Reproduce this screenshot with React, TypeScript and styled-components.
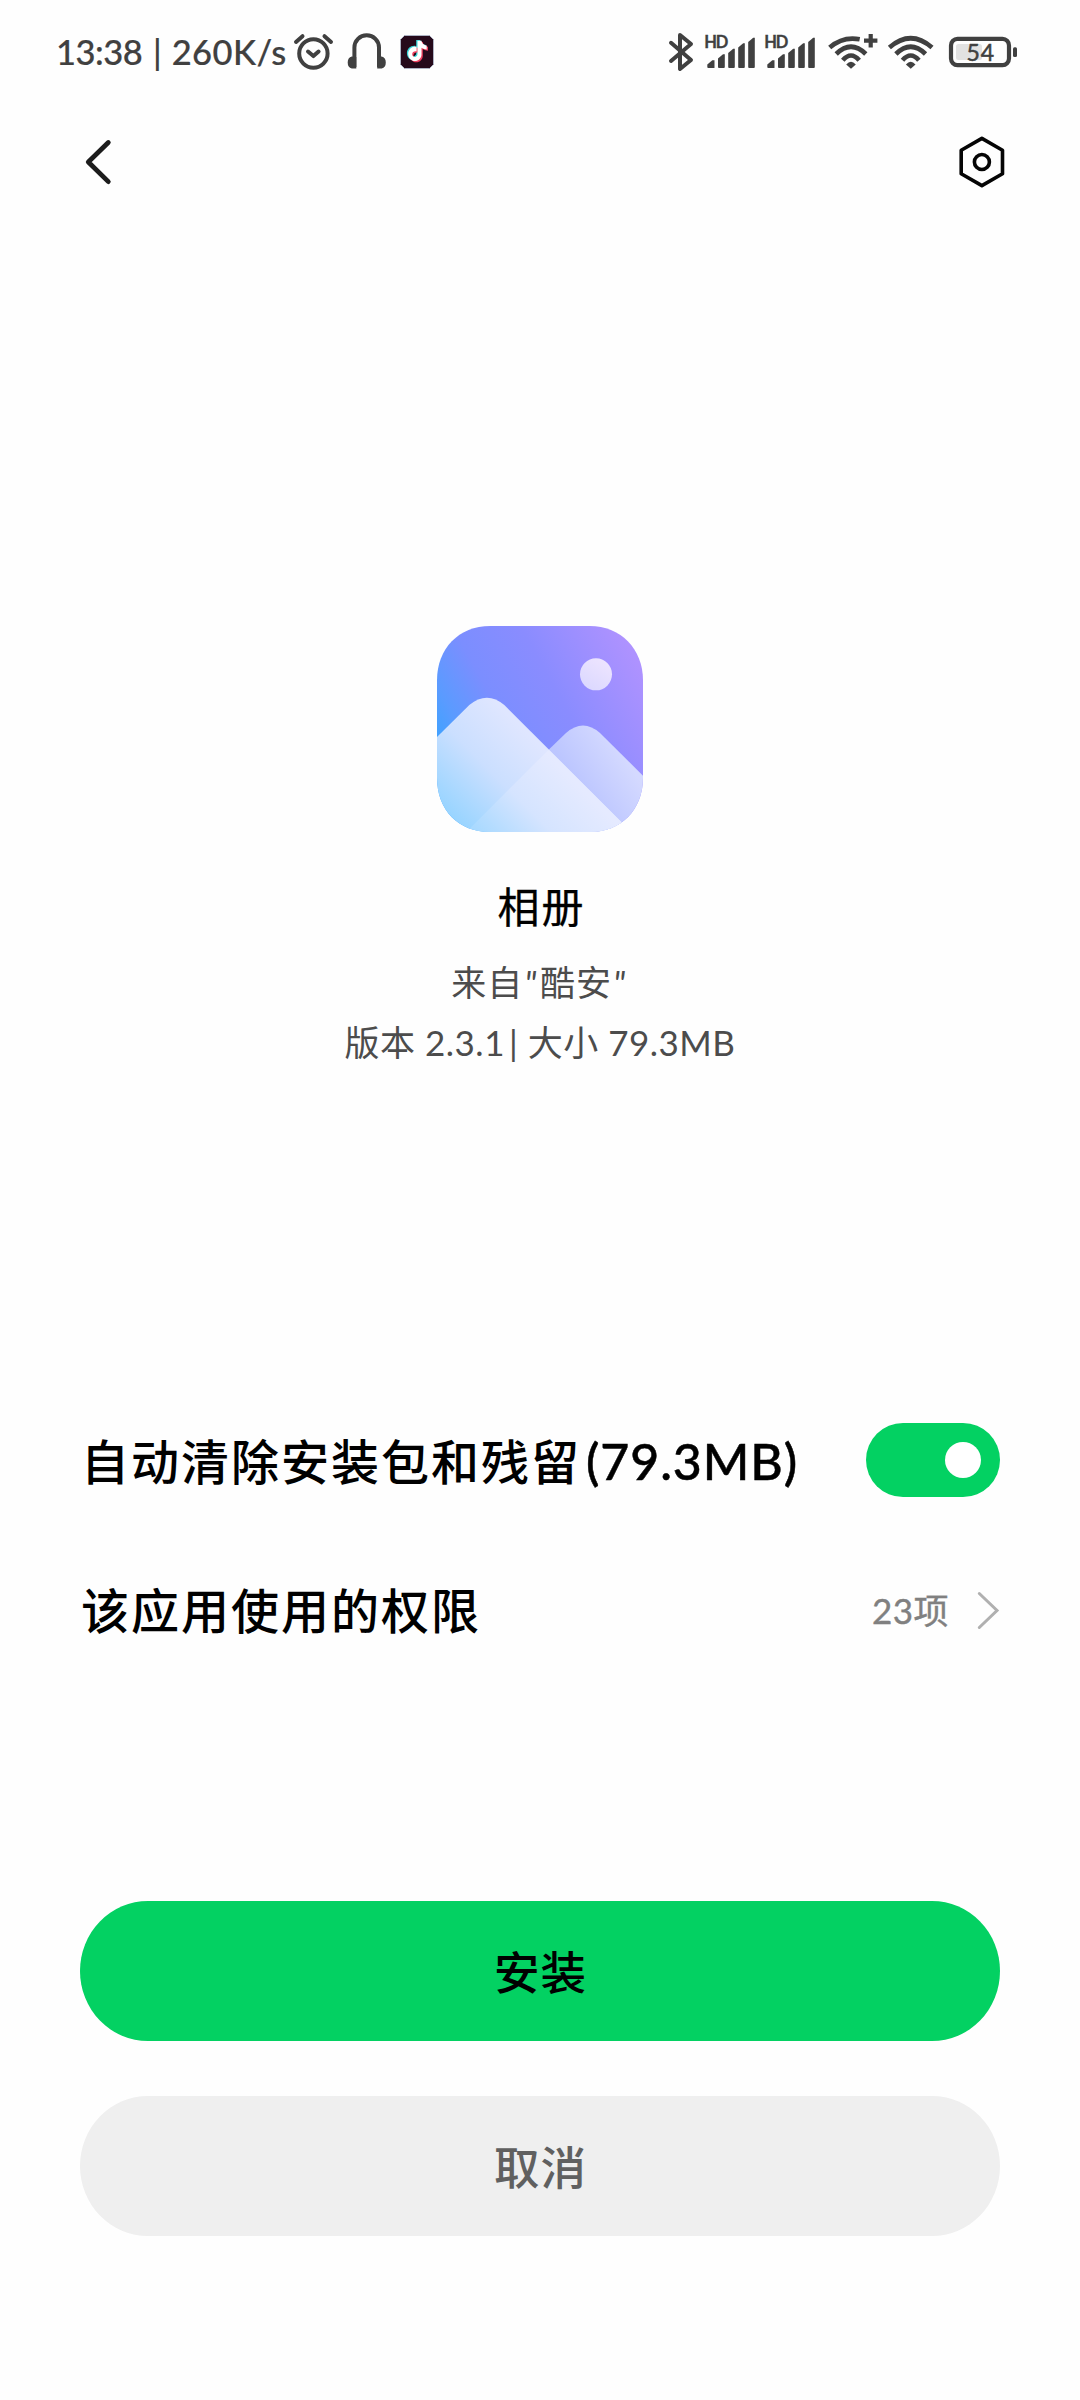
import React from "react";
import styled, { createGlobalStyle } from "styled-components";

const INK = "#404040";

const GlobalStyle = createGlobalStyle`
  *, *::before, *::after { box-sizing: border-box; }
  body {
    margin: 0;
    background: #fefefe;
    font-family: Lato, "Noto Sans CJK SC", sans-serif;
  }
  svg { display: block; flex: none; overflow: visible; }
`;

const Screen = styled.main`
  width: 1080px;
  height: 2400px;
  display: flex;
  flex-direction: column;
  background: #fefefe;
  overflow: hidden;
`;

const StatusBar = styled.header`
  height: 104px;
  padding: 0 61px 0 56px;
  display: flex;
  align-items: center;
  justify-content: space-between;
  color: ${INK};
`;

const StatusGroup = styled.div<{ $gap: number }>`
  display: flex;
  align-items: center;
  gap: ${(p) => p.$gap}px;
`;

const Clock = styled.div`
  width: 225px;
  display: flex;
  font-size: 34.5px;
  line-height: 44px;
  font-weight: 500;
  white-space: pre;
  -webkit-text-stroke: 0.2px ${INK};
`;

const ClockPart = styled.span<{ $spacing: number; $after?: number }>`
  letter-spacing: ${(p) => p.$spacing}px;
  margin-right: ${(p) => p.$after ?? 0}px;
`;

const TitleBar = styled.nav`
  height: 116px;
  padding: 0 72px 0 80px;
  display: flex;
  align-items: center;
  justify-content: space-between;
`;

const IconButton = styled.button`
  padding: 0;
  border: 0;
  background: none;
`;

const AppInfo = styled.section`
  margin-top: 406px;
  height: 759px;
  display: flex;
  flex-direction: column;
  align-items: center;
`;

const AppName = styled.h1`
  margin: 45px 0 15px;
  padding-left: 3px;
  height: 60px;
  font-size: 42px;
  line-height: 60px;
  font-weight: 400;
  letter-spacing: 2px;
  color: #000;
  -webkit-text-stroke: 0.3px #000;
`;

const AppMeta = styled.p<{ $spacing: number }>`
  margin: 0;
  height: 60px;
  font-size: 35px;
  line-height: 60px;
  letter-spacing: ${(p) => p.$spacing}px;
  color: #4c4c4c;
  white-space: pre;
`;

const Quote = styled.span`
  padding: 0 1px;
  font-style: italic;
  letter-spacing: 2.5px;
`;

const Divider = styled.span`
  margin-left: 4px;
`;

const Options = styled.section`
  padding: 0 80px;
  height: 516px;
`;

const OptionRow = styled.div`
  height: 150px;
  display: flex;
  align-items: center;
  justify-content: space-between;
`;

const OptionLabel = styled.span`
  padding: 2px 0 0 1px;
  font-size: 48px;
  line-height: 70px;
  font-weight: 500;
  letter-spacing: 2px;
  color: #000;
  white-space: nowrap;
`;

const Latin = styled.span`
  margin-left: 5px;
  font-size: 50px;
  letter-spacing: 0.9px;
  -webkit-text-stroke: 0.5px #000;
`;

const Switch = styled.div`
  width: 134px;
  height: 74px;
  padding-right: 19px;
  display: flex;
  align-items: center;
  justify-content: flex-end;
  border-radius: 37px;
  background: #03d162;
`;

const Knob = styled.span`
  width: 36px;
  height: 36px;
  border-radius: 50%;
  background: #fff;
`;

const OptionValue = styled.span`
  display: flex;
  align-items: center;
  gap: 27px;
  font-size: 35px;
  line-height: 50px;
  letter-spacing: 0.5px;
  color: #808080;
  -webkit-text-stroke: 0.4px #808080;
`;

const Actions = styled.footer`
  padding: 0 80px;
  display: flex;
  flex-direction: column;
  gap: 55px;
`;

const ActionButton = styled.button<{ $primary?: boolean }>`
  height: 140px;
  padding: 3px 0 0 1px;
  border: 0;
  border-radius: 68px / 70px;
  background: ${(p) => (p.$primary ? "#03d162" : "#efefef")};
  color: ${(p) => (p.$primary ? "#000" : "#606060")};
  font-family: inherit;
  font-size: 45.5px;
  line-height: 66px;
  font-weight: 500;
  letter-spacing: 1px;
`;

function AlarmIcon() {
  return (
    <svg width="40" height="40" viewBox="294 32 40 40" fill="none" stroke={INK} strokeLinecap="round">
      <circle cx="313.4" cy="53.5" r="14.2" strokeWidth="4" />
      <path d="M308 51.5l5.4 4.6 5.2-4.6" strokeWidth="4" strokeLinejoin="round" />
      <path d="M296 42l6.5-5.8M331 42l-6.5-5.8" strokeWidth="4" />
    </svg>
  );
}

function HeadphonesIcon() {
  return (
    <svg width="40" height="40" viewBox="347 32 40 40" fill="none">
      <path d="M354.4 67V47.5a12.3 12.3 0 0 1 24.6 0V67" stroke={INK} strokeWidth="4" />
      <path d="M356.3 57v11.5h-4.5q-4.1-1-4.1-6t4.1-6zM377.2 57v11.5h4.5q4.1-1 4.1-6t-4.1-6z" fill={INK} />
    </svg>
  );
}

function TiktokIcon() {
  const note =
    "M417.6 46.5c-4.5-.6-8.4 2.8-8.4 7.2 0 4.3 3.2 7.3 6.6 7.3 4 0 6.7-3 6.7-6.8V47.8c1.8 1.2 3.400 1.700 5.200 1.700v-4c-3-.2-4.700-2-5.200-4.800h-4v13.400c0 1.700-1.200 2.900-2.700 2.900-1.400 0-2.600-1.200-2.600-2.800 0-1.900 1.700-3.200 4.400-2.800z";
  return (
    <svg width="34" height="34" viewBox="401 35 34 34">
      <path d="M405.500 35.500h25l4 4v25l-4 4h-25l-4-4v-25z" fill="#260a1b" stroke="#aeb4c4" strokeWidth="1" />
      <path d={note} fill="#35d5d8" transform="translate(-1.300 -.8)" />
      <path d={note} fill="#f0405f" transform="translate(1.300 1.200)" />
      <path d={note} fill="#fff" />
    </svg>
  );
}

function BluetoothIcon() {
  return (
    <svg width="26" height="40" viewBox="668 32 26 40" fill="none" stroke={INK} strokeWidth="4" strokeLinejoin="round" strokeLinecap="round">
      <path d="M671 42.800L691 60 680 69V35l11 9L671 61" />
    </svg>
  );
}

function SignalIcon() {
  return (
    <svg width="50" height="40" viewBox="704 32 50 40" fill={INK}>
      <text x="704.300" y="47.900" fontFamily="Lato, sans-serif" fontSize="16.500" fontWeight="700" stroke={INK} strokeWidth=".3" textLength="24">
        HD
      </text>
      <path d="M707.300 64.500l5-4.300h2.200v7.300q0 .5-.5.500h-5.700q-1 0-1-1z" />
      <path d="M718 58.500l5-4.300h1.800V67q0 1-1 1h-4.800q-1 0-1-1z" />
      <path d="M728.200 53l5-4.300h1.600V67q0 1-1 1h-4.600q-1 0-1-1z" />
      <path d="M738.200 47.500l5-4.300h1.600V67q0 1-1 1h-4.600q-1 0-1-1z" />
      <path d="M748.200 42l5-4.300h1.600V67q0 1-1 1h-4.600q-1 0-1-1z" />
    </svg>
  );
}

function WifiIcon({ plus = false }: { plus?: boolean }) {
  return (
    <svg
      width={plus ? 54 : 51}
      height="40"
      viewBox={plus ? "824 32 54 40" : "828.3 32 51 40"}
      fill="none"
      stroke={INK}
      strokeWidth="4.7"
    >
      <path d={plus ? "M829.7 47.5Q843 36 859.7 39.3" : "M829.7 47.5Q851 29 872.3 47.5"} />
      <path d="M836.2 54Q851 39.500 865.800 54" />
      <path d="M842.800 60.200Q851 50.800 859.200 60.200" />
      <path d="M846.200 64.500q4.800-5.500 9.600 0l-4.800 4.300z" fill={INK} stroke="none" />
      {plus && <path d="M870.700 34v13.400M864 40.700h13.400" strokeWidth="4.200" />}
    </svg>
  );
}

function BatteryIcon() {
  return (
    <svg width="70" height="40" viewBox="949 32 70 40">
      <rect x="951" y="38.900" width="58" height="26.200" rx="6.500" fill="none" stroke={INK} strokeWidth="4.200" />
      <rect x="956" y="44" width="26" height="16" rx="2.500" fill="#e2e2e2" />
      <rect x="1013" y="47.200" width="4" height="9.800" rx="1.500" fill={INK} />
      <text x="966.500" y="60.600" fontFamily="Lato, sans-serif" fontSize="23" fill={INK} stroke={INK} strokeWidth=".5" textLength="27.500">
        54
      </text>
    </svg>
  );
}

function BackIcon() {
  return (
    <svg width="36" height="52" viewBox="80 136 36 52" fill="none" stroke="#1c1c1c" strokeWidth="4.800" strokeLinecap="round" strokeLinejoin="round">
      <path d="M108.300 142.500L88.300 162l20 19.600" />
    </svg>
  );
}

function SettingsIcon() {
  return (
    <svg width="52" height="56" viewBox="956.500 134.300 52 56" fill="none" stroke="#050505" strokeWidth="3.600" strokeLinejoin="round">
      <path d="M982.400 138.700l20.600 11.900v23.400l-20.600 11.900-20.700-11.900v-23.400z" />
      <circle cx="982.400" cy="162.300" r="7.500" />
    </svg>
  );
}

function ChevronIcon() {
  return (
    <svg width="24" height="40" viewBox="976 1589 24 40" fill="none" stroke="#b0b0b0" strokeWidth="3" strokeLinecap="round">
      <path d="M979.300 1592.500l17.700 17-17.700 17" />
    </svg>
  );
}

function GalleryIcon() {
  return (
    <svg width="206" height="206" viewBox="50 47 618 618">
      <defs>
        <linearGradient id="sky" gradientUnits="userSpaceOnUse" x1="40" y1="370" x2="600" y2="60">
          <stop offset="0" stopColor="#3fa2ff" />
          <stop offset=".12" stopColor="#5a9bff" />
          <stop offset=".32" stopColor="#7b8eff" />
          <stop offset=".6" stopColor="#8a8cff" />
          <stop offset="1" stopColor="#ae92ff" />
        </linearGradient>
        <linearGradient id="front" gradientUnits="userSpaceOnUse" x1="80" y1="610" x2="320" y2="370">
          <stop offset="0" stopColor="#97d4ff" />
          <stop offset=".54" stopColor="#cbdfff" />
          <stop offset="1" stopColor="#dfe6ff" />
        </linearGradient>
        <linearGradient id="overlap" gradientUnits="userSpaceOnUse" x1="80" y1="610" x2="320" y2="370">
          <stop offset="0" stopColor="#a2d8ff" />
          <stop offset=".2" stopColor="#b4dcff" />
          <stop offset=".54" stopColor="#d5e4ff" />
          <stop offset="1" stopColor="#e5eaff" />
        </linearGradient>
        <linearGradient id="back" gradientUnits="userSpaceOnUse" x1="460" y1="500" x2="590" y2="410">
          <stop offset="0" stopColor="#bcc6ff" />
          <stop offset="1" stopColor="#d4d9ff" />
        </linearGradient>
        <linearGradient id="sun" gradientUnits="userSpaceOnUse" x1="500" y1="230" x2="550" y2="150">
          <stop offset="0" stopColor="#dcd9ff" />
          <stop offset="1" stopColor="#ede4ff" />
        </linearGradient>
        <clipPath id="tile">
          <path d="M210 47H508C600 47 668 115 668 210V502C668 600 600 665 508 665H210C115 665 50 600 50 502V210C50 115 115 47 210 47Z" />
        </clipPath>
      </defs>
      <g clipPath="url(#tile)">
        <path d="M50 47h618v618H50z" fill="url(#sky)" />
        <circle cx="527" cy="192" r="48" fill="url(#sun)" />
        <path d="M385 418L437 368Q488 323 539 368L668 496V665H385Z" fill="url(#back)" />
        <path d="M50 380L147 284Q200 240 252 284L633 665H50Z" fill="url(#front)" />
        <path d="M385 418L138 665H633Z" fill="url(#overlap)" />
      </g>
    </svg>
  );
}

export default function App() {
  return (
    <>
      <GlobalStyle />
      <Screen>
        <StatusBar>
          <StatusGroup $gap={13}>
            <Clock>
              <ClockPart $spacing={-0.5} $after={2}>13:38</ClockPart>
              <ClockPart $spacing={0.1} $after={1}> | </ClockPart>
              <ClockPart $spacing={0.4}>260K/s</ClockPart>
            </Clock>
            <AlarmIcon />
            <HeadphonesIcon />
            <TiktokIcon />
          </StatusGroup>
          <StatusGroup $gap={10}>
            <BluetoothIcon />
            <SignalIcon />
            <SignalIcon />
            <WifiIcon plus />
            <WifiIcon />
            <BatteryIcon />
          </StatusGroup>
        </StatusBar>
        <TitleBar>
          <IconButton aria-label="返回">
            <BackIcon />
          </IconButton>
          <IconButton aria-label="设置">
            <SettingsIcon />
          </IconButton>
        </TitleBar>
        <AppInfo>
          <GalleryIcon />
          <AppName>相册</AppName>
          <AppMeta $spacing={1}>
            来自<Quote>"</Quote>酷安<Quote>"</Quote>
          </AppMeta>
          <AppMeta $spacing={0.5}>
            版本 2.3.1<Divider>|</Divider> 大小 79.3MB
          </AppMeta>
        </AppInfo>
        <Options>
          <OptionRow>
            <OptionLabel>
              自动清除安装包和残留<Latin>(79.3MB)</Latin>
            </OptionLabel>
            <Switch role="switch" aria-checked="true">
              <Knob />
            </Switch>
          </OptionRow>
          <OptionRow>
            <OptionLabel>该应用使用的权限</OptionLabel>
            <OptionValue>
              23项
              <ChevronIcon />
            </OptionValue>
          </OptionRow>
        </Options>
        <Actions>
          <ActionButton $primary>安装</ActionButton>
          <ActionButton>取消</ActionButton>
        </Actions>
      </Screen>
    </>
  );
}
